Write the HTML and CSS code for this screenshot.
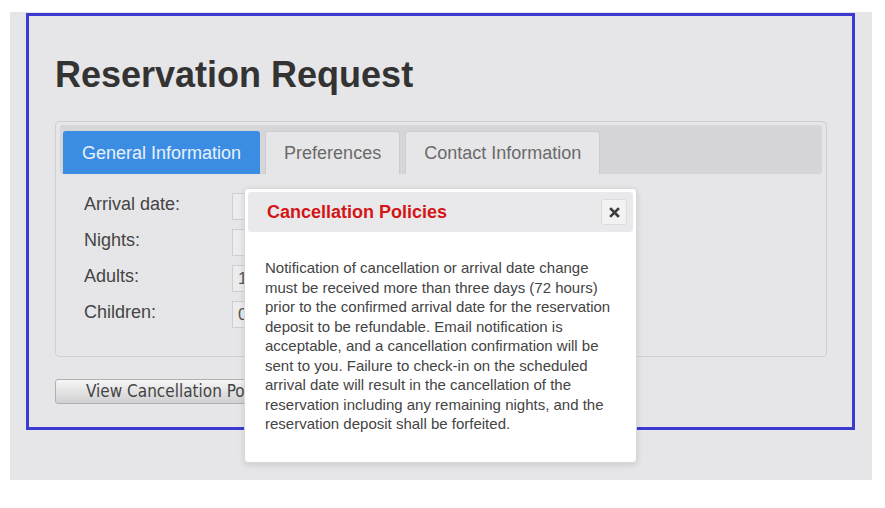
FILE: index.html
```html
<!DOCTYPE html>
<html lang="en">
<head>
<meta charset="utf-8">
<title>Reservation Request</title>
<link rel="stylesheet" href="styles.css">
</head>
<body>
<div class="stage">
  <div class="frame">
    <h1 class="title">Reservation Request</h1>
    <div class="panel">
      <div class="tabbar">
        <div class="tab active">General Information</div>
        <div class="tab">Preferences</div>
        <div class="tab">Contact Information</div>
      </div>
      <div class="form">
        <div class="row"><label class="label">Arrival date:</label><div class="input"></div></div>
        <div class="row"><label class="label">Nights:</label><div class="input"></div></div>
        <div class="row"><label class="label">Adults:</label><div class="input">1</div></div>
        <div class="row"><label class="label">Children:</label><div class="input">0</div></div>
      </div>
    </div>
    <button class="btn">View Cancellation Policies</button>
  </div>
</div>

<div class="modal">
  <div class="modal-head">
    <span class="modal-title">Cancellation Policies</span>
    <span class="close">
      <svg width="11" height="11" viewBox="0 0 11 11"><path d="M2 2 L9 9 M9 2 L2 9" stroke="#3c3c3c" stroke-width="2.6" stroke-linecap="square"/></svg>
    </span>
  </div>
  <div class="modal-body">Notification of cancellation or arrival date change must be received more than three days (72 hours) prior to the confirmed arrival date for the reservation deposit to be refundable. Email notification is acceptable, and a cancellation confirmation will be sent to you. Failure to check-in on the scheduled arrival date will result in the cancellation of the reservation including any remaining nights, and the reservation deposit shall be forfeited.</div>
</div>
</body>
</html>
```
FILE: styles.css
```css
html, body {
  margin: 0;
  padding: 0;
  background: #ffffff;
  font-family: "Liberation Sans", Arial, sans-serif;
}

.stage {
  margin: 12px 0 0 10px;
  width: 862px;
  height: 468px;
  box-sizing: border-box;
  padding: 1px 0 0 16px;
  background: #e6e6e8;
}

.frame {
  width: 829px;
  height: 417px;
  box-sizing: border-box;
  border: 3px solid #3b3bd2;
  padding: 0 0 0 26px;
}

.title {
  margin: 39px 0 0 0;
  font-size: 36px;
  line-height: 40px;
  font-weight: bold;
  color: #333333;
}

.panel {
  margin-top: 26px;
  width: 772px;
  height: 236px;
  box-sizing: border-box;
  border: 1px solid #cfcfd1;
  border-radius: 4px;
  padding: 3px 4px 0 4px;
}

.tabbar {
  height: 49px;
  box-sizing: border-box;
  background: #d6d6d8;
  border-radius: 3px;
  display: flex;
  align-items: flex-end;
  gap: 5px;
  padding-left: 3px;
}

.tab {
  height: 43px;
  box-sizing: border-box;
  padding: 0 18px;
  border: 1px solid #cdcdcf;
  border-bottom: none;
  border-radius: 3px 3px 0 0;
  background: #e6e6e8;
  font-size: 18px;
  line-height: 42px;
  color: #6a6a6a;
  white-space: nowrap;
}

.tab.active {
  background: #3b8de4;
  border-color: #3b8de4;
  color: #e8f1fc;
}

.form {
  padding: 19px 0 0 24px;
}

.row {
  display: grid;
  grid-template-columns: 148px 220px;
  height: 27px;
  margin-bottom: 9px;
}

.label {
  font-size: 18px;
  line-height: 22px;
  color: #444444;
}

.input {
  height: 27px;
  box-sizing: border-box;
  border: 1px solid #cfcfd1;
  background: #ececee;
  padding-left: 5px;
  font-size: 17px;
  line-height: 25px;
  color: #555555;
}

.btn {
  display: block;
  margin-top: 22px;
  height: 25px;
  padding: 0 30px;
  border: 1px solid #b0b0b2;
  border-radius: 3px;
  background: linear-gradient(#f6f6f6, #d0d0d2);
  font-family: "DejaVu Sans Condensed", "DejaVu Sans", sans-serif;
  font-stretch: condensed;
  font-size: 17px;
  line-height: 23px;
  color: #444444;
}

.modal {
  position: absolute;
  left: 244px;
  top: 188px;
  width: 393px;
  height: 275px;
  box-sizing: border-box;
  background: #ffffff;
  border: 1px solid #d8d8da;
  border-radius: 4px;
  box-shadow: 0 2px 6px rgba(0, 0, 0, 0.12);
  padding: 3px;
}

.modal-head {
  height: 40px;
  box-sizing: border-box;
  background: #e9e9eb;
  border-radius: 3px;
  display: flex;
  align-items: center;
  justify-content: space-between;
  padding: 0 6px 0 19px;
}

.modal-title {
  font-size: 18px;
  font-weight: bold;
  color: #d41515;
}

.close {
  width: 26px;
  height: 26px;
  box-sizing: border-box;
  border: 1px solid #dcdcde;
  border-radius: 3px;
  background: #f2f2f3;
  display: flex;
  align-items: center;
  justify-content: center;
}

.modal-body {
  padding: 26px 16px 0 17px;
  font-size: 15px;
  line-height: 19.5px;
  color: #444444;
}
```
